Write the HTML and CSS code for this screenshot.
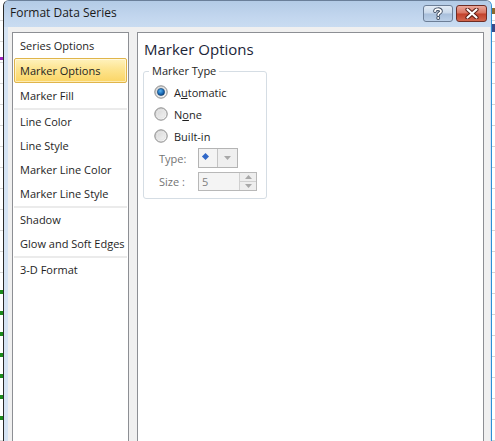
FILE: index.html
```
<!DOCTYPE html>
<html>
<head>
<meta charset="utf-8">
<link rel="stylesheet" href="styles.css">
</head>
<body>
<div class="desk">
  <div class="xl-left">
    <div class="xl-purple"></div>
    <div class="xl-greens">
      <span></span><span></span><span></span><span></span><span></span><span></span><span></span>
    </div>
  </div>
  <div class="window">
    <div class="titlebar">
      <div class="title">Format Data Series</div>
      <div class="caption-btns">
        <div class="cbtn help">
          <svg width="12" height="13" viewBox="0 0 12 13"><path d="M3 4.2 C3 1.6 9 1.4 9 4.2 C9 6.2 6.2 6 6.2 8" fill="none" stroke="#3d4a5e" stroke-width="3.6" stroke-linecap="round"/><path d="M3 4.2 C3 1.6 9 1.4 9 4.2 C9 6.2 6.2 6 6.2 8" fill="none" stroke="#fff" stroke-width="1.8" stroke-linecap="round"/><circle cx="6.2" cy="11" r="1.9" fill="#3d4a5e"/><circle cx="6.2" cy="11" r="1" fill="#fff"/></svg>
        </div>
        <div class="cbtn close">
          <svg width="14" height="11" viewBox="0 0 14 11"><path d="M2.5 1.5 L11.5 9.5 M11.5 1.5 L2.5 9.5" stroke="#5a1d14" stroke-width="4.2" stroke-linecap="round"/><path d="M2.5 1.5 L11.5 9.5 M11.5 1.5 L2.5 9.5" stroke="#fff" stroke-width="2.2" stroke-linecap="round"/></svg>
        </div>
      </div>
    </div>
    <div class="frame">
      <div class="content">
        <div class="nav">
          <div class="grp grp1">
            <div class="item">Series Options</div>
            <div class="item sel">Marker Options</div>
            <div class="item">Marker Fill</div>
          </div>
          <div class="sep"></div>
          <div class="grp">
            <div class="item">Line Color</div>
            <div class="item">Line Style</div>
            <div class="item">Marker Line Color</div>
            <div class="item">Marker Line Style</div>
          </div>
          <div class="sep"></div>
          <div class="grp">
            <div class="item">Shadow</div>
            <div class="item">Glow and Soft Edges</div>
          </div>
          <div class="sep"></div>
          <div class="grp">
            <div class="item">3-D Format</div>
          </div>
        </div>
        <div class="pane">
          <div class="heading">Marker Options</div>
          <div class="groupbox">
            <div class="legend">Marker Type</div>
            <div class="radio-row r1">
              <svg class="radio" width="14" height="14" viewBox="0 0 14 14"><defs><linearGradient id="rg1" x1="0" y1="0" x2="1" y2="1"><stop offset="0" stop-color="#cfcfcf"/><stop offset="1" stop-color="#fbfbfb"/></linearGradient><radialGradient id="dot" cx="0.4" cy="0.35" r="0.7"><stop offset="0" stop-color="#5ab4f0"/><stop offset="0.6" stop-color="#1b6cb8"/><stop offset="1" stop-color="#0c3f78"/></radialGradient></defs><circle cx="7" cy="7" r="6.2" fill="url(#rg1)" stroke="#8a8a8a" stroke-width="1"/><circle cx="7" cy="7" r="3.6" fill="url(#dot)" stroke="#12406e" stroke-width="0.6"/></svg>
              <span class="rlabel">A<u>u</u>tomatic</span>
            </div>
            <div class="radio-row">
              <svg class="radio" width="14" height="14" viewBox="0 0 14 14"><defs><linearGradient id="rg2" x1="0" y1="0" x2="1" y2="1"><stop offset="0" stop-color="#cfcfcf"/><stop offset="1" stop-color="#fbfbfb"/></linearGradient></defs><circle cx="7" cy="7" r="6.2" fill="url(#rg2)" stroke="#8a8a8a" stroke-width="1"/><circle cx="7" cy="7" r="4" fill="none" stroke="#e6e6e6" stroke-width="1"/></svg>
              <span class="rlabel">N<u>o</u>ne</span>
            </div>
            <div class="radio-row">
              <svg class="radio" width="14" height="14" viewBox="0 0 14 14"><defs><linearGradient id="rg3" x1="0" y1="0" x2="1" y2="1"><stop offset="0" stop-color="#cfcfcf"/><stop offset="1" stop-color="#fbfbfb"/></linearGradient></defs><circle cx="7" cy="7" r="6.2" fill="url(#rg3)" stroke="#8a8a8a" stroke-width="1"/><circle cx="7" cy="7" r="4" fill="none" stroke="#e6e6e6" stroke-width="1"/></svg>
              <span class="rlabel">Built-in</span>
            </div>
            <div class="field-row type-row">
              <span class="flabel">Type:</span>
              <div class="combo">
                <div class="combo-val"><span class="diamond"></span></div>
                <div class="combo-btn"><svg width="7" height="4" viewBox="0 0 7 4"><path d="M0 0 H7 L3.5 4 Z" fill="#a8a8a8"/></svg></div>
              </div>
            </div>
            <div class="field-row size-row">
              <span class="flabel">Size :</span>
              <div class="spin">
                <div class="spin-val">5</div>
                <div class="spin-btns">
                  <div class="sb"><svg width="7" height="4" viewBox="0 0 7 4"><path d="M0 4 H7 L3.5 0 Z" fill="#a8a8a8"/></svg></div>
                  <div class="sb"><svg width="7" height="4" viewBox="0 0 7 4"><path d="M0 0 H7 L3.5 4 Z" fill="#a8a8a8"/></svg></div>
                </div>
              </div>
            </div>
          </div>
        </div>
      </div>
    </div>
  </div>
  <div class="xl-right">
    <div class="xr-mark"></div>
    <div class="xr-mark2"></div>
  </div>
</div>
</body>
</html>
```
FILE: styles.css
```
html, body {
  margin: 0;
  padding: 0;
  width: 495px;
  height: 441px;
  overflow: hidden;
  background: #ffffff;
  font-family: "Open Sans", "Noto Sans", sans-serif;
}
.desk {
  display: flex;
  height: 441px;
}
.xl-left {
  width: 3px;
  flex: none;
  background: repeating-linear-gradient(#fff 0 20px, #d8d8d8 20px 21px);
  display: flex;
  flex-direction: column;
}
.xl-purple {
  margin-top: 57px;
  height: 3px;
  background: #a020c0;
}
.xl-greens {
  margin-top: 230px;
  display: flex;
  flex-direction: column;
  gap: 17px;
}
.xl-greens span {
  display: block;
  height: 4px;
  width: 3px;
  background: #1a8a1a;
}
.window {
  flex: none;
  width: 487px;
  border-left: 1px solid #2a2a2a;
  border-right: 1px solid #2d8fd6;
  border-top: 1px solid #6a7f99;
  border-radius: 6px 6px 0 0;
  display: flex;
  flex-direction: column;
  background: #cfdff1;
}
.titlebar {
  height: 26px;
  flex: none;
  display: flex;
  align-items: flex-start;
  justify-content: space-between;
  background: linear-gradient(#b3cbe6, #c2d6ee 60%, #c9dcf1);
  border-radius: 5px 5px 0 0;
}
.title {
  margin-left: 6px;
  margin-top: 4px;
  font-size: 12px;
  line-height: 16px;
  color: #1a1a1a;
}
.caption-btns {
  display: flex;
  gap: 3px;
  margin-top: 4px;
  margin-right: 4px;
}
.cbtn {
  height: 15px;
  border-radius: 3px;
  display: flex;
  align-items: center;
  justify-content: center;
}
.help {
  width: 28px;
  border: 1px solid #6c7e96;
  background: linear-gradient(#e3ecf6, #c9d8ea 48%, #a8bfdb 52%, #bcd0e8);
}
.close {
  width: 29px;
  border: 1px solid #6e2d25;
  background: linear-gradient(#eaa89c, #d9735f 48%, #c2402a 52%, #d2664d);
}
.frame {
  flex: 1;
  display: flex;
  padding-left: 4px;
  padding-right: 1px;
  background: #d6e4f4;
}
.content {
  flex: 1;
  background: #f0f0f0;
  display: flex;
  gap: 8px;
  padding: 5px 6px 0 4px;
}
.nav {
  width: 115px;
  flex: none;
  background: #fff;
  border: 1px solid #8d8f94;
  border-bottom: none;
  display: flex;
  flex-direction: column;
}
.item {
  height: 24px;
  line-height: 24px;
  padding-left: 7px;
  font-size: 11px;
  color: #1e1e1e;
  white-space: nowrap;
}
.grp1 .item {
  height: 25px;
  line-height: 25px;
}
.item.sel {
  margin: 0 1px;
  padding-left: 5px;
  height: 23px;
  line-height: 23px;
  border: 1px solid #e0b54a;
  border-radius: 2px;
  background: linear-gradient(#fff2bd, #fde48f 45%, #fbd565);
  box-shadow: inset 0 0 0 1px rgba(255, 255, 255, 0.5);
}
.sep {
  height: 2px;
  background: #ebebeb;
  margin: 0 1px;
}
.pane {
  flex: 1;
  background: #fff;
  border: 1px solid #8d8f94;
  border-bottom: none;
  padding: 6px 0 0 6px;
}
.heading {
  font-size: 15px;
  line-height: 20px;
  color: #1b2538;
}
.groupbox {
  margin-top: 12px;
  width: 122px;
  height: 126px;
  border: 1px solid #d5dde4;
  border-radius: 3px;
  position: relative;
  margin-left: -1px;
}
.legend {
  position: absolute;
  top: -9px;
  left: 5px;
  padding: 0 3px;
  background: #fff;
  font-size: 11px;
  line-height: 16px;
  color: #1e1e1e;
}
.radio-row {
  display: flex;
  align-items: center;
  height: 22px;
  padding-left: 10px;
  gap: 6px;
  font-size: 11px;
  color: #1e1e1e;
}
.radio-row.r1 {
  margin-top: 9px;
}
.radio {
  display: block;
}
.field-row {
  display: flex;
  align-items: center;
  padding-left: 15px;
  font-size: 11px;
  color: #747474;
}
.type-row {
  height: 22px;
}
.size-row {
  margin-top: 1px;
  height: 22px;
}
.flabel {
  width: 39px;
}
.combo {
  display: flex;
  width: 38px;
  height: 18px;
  border: 1px solid #b4b4b4;
  background: #f4f4f4;
}
.combo-val {
  width: 19px;
  border-right: 1px solid #c4c4c4;
  display: flex;
  align-items: center;
  padding-left: 3px;
  box-sizing: border-box;
}
.diamond {
  width: 5px;
  height: 5px;
  background: #3168c8;
  transform: rotate(45deg);
  margin-left: 1px;
  margin-top: -3px;
}
.combo-btn {
  flex: 1;
  display: flex;
  align-items: center;
  justify-content: center;
  background: #efefef;
}
.spin {
  display: flex;
  width: 57px;
  height: 17px;
  border: 1px solid #b8b8b8;
  background: #f4f4f4;
}
.spin-val {
  flex: 1;
  padding-left: 3px;
  line-height: 17px;
  color: #808080;
}
.spin-btns {
  width: 16px;
  display: flex;
  flex-direction: column;
  border-left: 1px solid #d0d0d0;
}
.sb {
  flex: 1;
  display: flex;
  align-items: center;
  justify-content: center;
  background: #eeeeee;
}
.sb + .sb {
  border-top: 1px solid #d0d0d0;
}
.xl-right {
  width: 3px;
  flex: none;
  background: repeating-linear-gradient(#fff 0 20px, #d4d4d4 20px 21px);
  display: flex;
  flex-direction: column;
}
.xr-mark {
  margin-top: 8px;
  height: 6px;
  background: #8a6a30;
}
.xr-mark2 {
  margin-top: 10px;
  height: 8px;
  background: #3a4a8a;
}
```
